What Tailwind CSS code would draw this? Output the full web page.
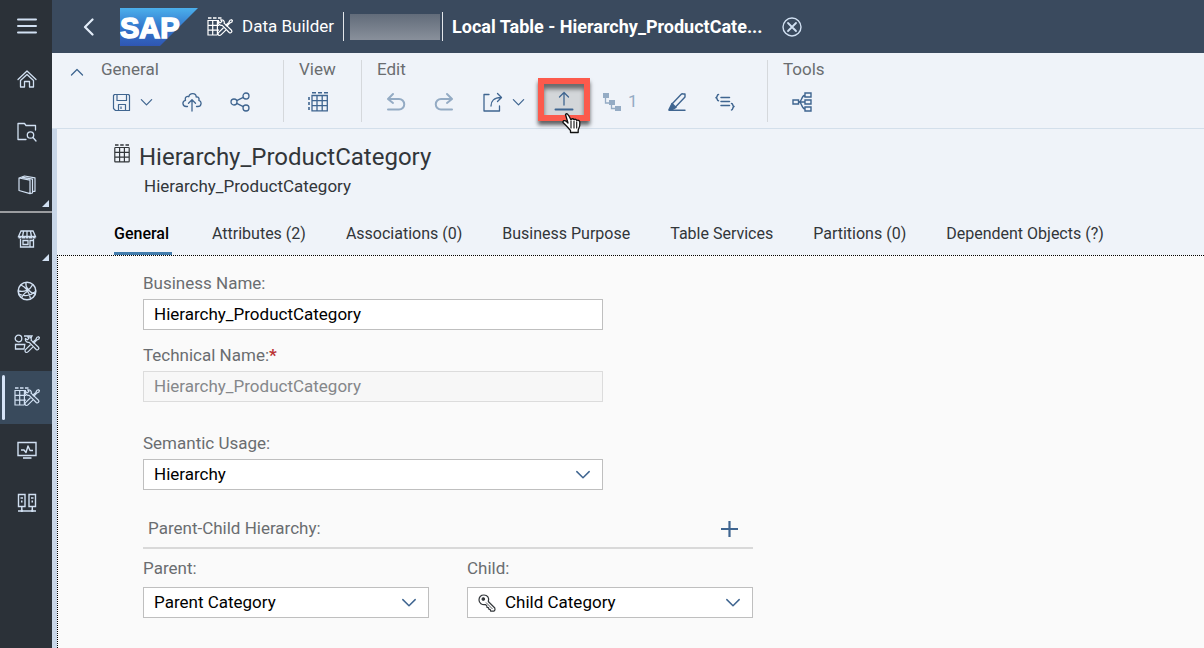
<!DOCTYPE html>
<html lang="en">
<head>
<meta charset="utf-8">
<meta name="viewport" content="width=device-width, initial-scale=1">
<title>Data Builder</title>
<script src="https://cdn.jsdelivr.net/npm/@tailwindcss/browser@4"></script>
</head>
<body class="flex min-h-screen bg-[#fafafa] font-['Roboto','Liberation_Sans',sans-serif] text-base text-[#32363a]">

<svg class="hidden" aria-hidden="true">
  <symbol id="down" viewBox="0 0 16 16"><path d="M2.500 5l5.500 5.500L13.500 5" fill="none" stroke="currentColor" stroke-width="1.300" stroke-linecap="round" stroke-linejoin="round"/></symbol>
  <symbol id="tools" viewBox="0 0 26 20">
    <g fill="none" stroke="currentColor" stroke-width="1.200" stroke-linecap="round" stroke-linejoin="round">
      <path d="M11.500 4.500a3 3 0 0 0 3.700 3.800l7 7.200a1.600 1.600 0 0 0 2.300-2.200l-7.200-6.900"/>
      <path d="M11.500 4.500l1.700 1.400 1.700-1.400-1.200-1.700c2.200-.4 4 1.200 3.600 3.600"/>
      <path d="M16.200 11l-4.700 4.600c-1 1.300-.3 2.800 1 2.900.8 0 1.300-.4 1.700-.8l4.300-4.400M20 9l2.500-2.700 2.400-1.300.5-1.500-.9-.8-1.500.6-1.300 2.300-2.700 2.400"/>
    </g>
  </symbol>
  <symbol id="builder" viewBox="0 0 26 20">
    <path d="M1 1h3.500M6 1h3.500M11 1h3.500" stroke="currentColor" stroke-width="1.500"/>
    <path d="M12 3.500H1V18h9.500M1 8.300h11M1 13.200h11M5.700 3.500V18M10.400 3.500V18" fill="none" stroke="currentColor" stroke-width="1.200"/>
    <use href="#tools"/>
  </symbol>
  <symbol id="table" viewBox="0 0 16 19">
    <path d="M1 1h3.500M6.200 1h3.500M11.500 1h3.500" stroke="currentColor" stroke-width="1.300"/>
    <path d="M1.500 3.500h13q.7 0 .7.700v13q0 .7-.7.700h-13q-.7 0-.7-.7v-13q0-.7.7-.7zM1 8.300h14M1 13.100h14M5.600 3.500v14.400M10.400 3.500v14.400" fill="none" stroke="currentColor" stroke-width="1.200"/>
  </symbol>
</svg>

<nav aria-label="Main" class="flex w-[52px] shrink-0 flex-col bg-[#2b3138] text-[#d1e0f2]">
  <button aria-label="Menu" class="grid h-[53px] place-items-center pb-px pl-px"><svg class="h-4 w-5" viewBox="0 0 20 16" stroke="currentColor" stroke-width="2" stroke-linecap="round"><path d="M1 1.500h18M1 8h18M1 14.500h18"/></svg></button>
  <button aria-label="Home" class="grid h-[53px] place-items-center pb-px pl-px"><svg class="size-5" viewBox="0 0 20 20" fill="none" stroke="currentColor" stroke-width="1.300" stroke-linejoin="round" stroke-linecap="round"><path d="M1 10.500L10 2l9 8.500M3.500 11.500L10 5.500l6.500 6V18h-4v-5.500h-5V18h-4z"/></svg></button>
  <button aria-label="Repository Explorer" class="grid h-[53px] place-items-center pb-px pl-px"><svg class="size-5" viewBox="0 0 20 20" fill="none" stroke="currentColor" stroke-width="1.300" stroke-linejoin="round" stroke-linecap="round"><path d="M9 17.500H1V1.500h6.500L9 3.500h9.500V8"/><circle cx="13.500" cy="13" r="3.200"/><path d="M16 15.500l3 3.500"/></svg></button>
  <button aria-label="Catalog" class="relative grid h-[54px] place-items-center border-b-2 border-[#9b9da0] pb-px pl-px"><svg class="size-5" viewBox="0 0 20 20" fill="none" stroke="currentColor" stroke-width="1.200" stroke-linejoin="round" stroke-linecap="round"><path d="M2 3l11 2.200v13.500L2 15.500zM2 3L7.500 1 18 2.800v13.500h-1.500M4.500 2.200l11 2V18l-2.500.7"/></svg><svg class="absolute right-[3px] bottom-1 size-[7px]" viewBox="0 0 7 7"><path d="M7 0v7H0z" fill="currentColor"/></svg></button>
  <button aria-label="Data Marketplace" class="relative grid h-[52px] place-items-center pb-px pl-px"><svg class="size-5" viewBox="0 0 20 20" fill="none" stroke="currentColor" stroke-width="1.300"><path d="M4 2h12l2.500 5.500h-17zM6.500 2.500l-1 5M10 2.500v5M13.500 2.500l1 5"/><path d="M1.500 8.200h17" stroke-width="2.400" stroke-dasharray="3 .5"/><path d="M3.500 10v8h13v-8M6 11.500h5v4H6zM13 18v-6.500h3"/></svg><svg class="absolute right-[3px] bottom-1 size-[7px]" viewBox="0 0 7 7"><path d="M7 0v7H0z" fill="currentColor"/></svg></button>
  <button aria-label="Semantic Onboarding" class="grid h-[53px] place-items-center pb-px pl-px"><svg class="size-5" viewBox="0 0 20 20" fill="none" stroke="currentColor" stroke-width="1.300"><circle cx="10" cy="10" r="8.800" stroke-width="1.600"/><path d="M4 4c3.500 1.500 7.500 5 9.500 13.500M9 1.500c-1 5 3.500 10.500 9.500 11.500M1.500 10c6 1.500 11.500-1 14-6M2 13c5 2.500 11.500 2 16.500-2.500M4.500 16.500c1.500-3 3.500-5 6.500-6.500"/></svg></button>
  <button aria-label="Business Builder" class="grid h-[53px] place-items-center pb-px pl-px"><svg class="h-5 w-[26px]" viewBox="0 0 26 20" fill="none" stroke="currentColor" stroke-width="1.300"><circle cx="4.500" cy="4.500" r="3.300"/><path d="M1.500 10.500h9.300l-.8 4.500H1.500zM10 2h8l-1 2"/><use href="#tools"/></svg></button>
  <button aria-label="Data Builder" aria-current="page" class="relative grid h-[53px] place-items-center bg-[#394a5c] pb-px pl-px"><span class="absolute inset-y-1 left-[2px] w-[3px] rounded-full bg-[#d6e4f8]"></span><svg class="h-5 w-[26px]"><use href="#builder"/></svg></button>
  <button aria-label="Data Integration Monitor" class="grid h-[53px] place-items-center pb-px pl-px"><svg class="size-5" viewBox="0 0 20 20" fill="none" stroke="currentColor" stroke-width="1.400"><path d="M1 2.500h18v13H1z"/><path d="M4 10h3l2 2.500 2-6.500 2 4.500h3" stroke-linejoin="round"/><path d="M6 18h8.500" stroke-width="1.600"/></svg></button>
  <button aria-label="Connections" class="grid h-[53px] place-items-center pb-px pl-px"><svg class="size-5" viewBox="0 0 20 20" fill="none" stroke="currentColor" stroke-width="1.400"><path d="M1.500 1.500h6.500v12H1.500zM12 1.500h6.500v12H12zM4.800 13.500v4.500M15.300 13.500v4.500M1 18h18M3.500 5h2.500M14 5h2.500"/><path d="M4 8.500h1.500M14.500 8.500H16M4.800 16.800v2.200M15.300 16.800v2.200" stroke-width="2"/></svg></button>
</nav>

<div class="flex min-w-0 grow flex-col">
  <header class="flex h-[53px] shrink-0 items-center bg-[#3a4a5e] text-[17px] text-white">
    <button aria-label="Back" class="ml-[27px] grid w-5 place-items-center text-[#e3edf9]"><svg class="h-[18px] w-3" viewBox="0 0 12 18" fill="none" stroke="currentColor" stroke-width="2.200" stroke-linecap="round" stroke-linejoin="round"><path d="M9.500 1.500L2 9l7.500 7.500"/></svg></button>
    <svg class="ml-[21px] h-[38px] w-[78px] shrink-0" viewBox="0 0 78 38" role="img" aria-label="SAP"><defs><linearGradient id="logo" x2="0" y2="1"><stop stop-color="#4bb0ec"/><stop offset=".5" stop-color="#3478cd"/><stop offset="1" stop-color="#2f56b3"/></linearGradient></defs><path d="M0 0h78L40 38H0z" fill="url(#logo)"/><text x="0" y="30" fill="#fff" stroke="#fff" stroke-width="1.500" font-family="Liberation Sans" font-size="29" font-weight="700">SAP</text></svg>
    <a href="#" class="ml-[9px] flex items-center gap-[9px] whitespace-nowrap"><svg class="h-5 w-[26px]"><use href="#builder"/></svg>Data Builder</a>
    <span class="ml-[9px] h-[29px] w-px shrink-0 bg-[#e2e6ea]"></span>
    <span class="mx-[6px] h-[26px] w-[90px] shrink-0 bg-linear-to-b from-[#626c7a] to-[#89909b]"></span>
    <span class="-ml-1 h-[29px] w-px shrink-0 bg-[#e2e6ea]"></span>
    <h2 class="ml-[9px] truncate text-lg font-bold">Local Table - Hierarchy_ProductCate...</h2>
    <button aria-label="Close" class="ml-[19px] shrink-0 text-[#d1e0f2]"><svg class="size-5" viewBox="0 0 20 20" fill="none" stroke="currentColor" stroke-width="1.400" stroke-linecap="round"><circle cx="10" cy="10" r="9"/><path d="M6 6l8 8M14 6l-8 8" stroke-width="1.800"/></svg></button>
  </header>

  <div role="toolbar" aria-label="Table actions" class="flex h-[76px] shrink-0 border-b border-[#d3dfeb] bg-[#eff3f9] pt-[7px] text-[#3f6590]">
    <button aria-label="Collapse toolbar" class="flex h-6 w-[44px] justify-center pt-1 pl-[6px]"><svg class="size-4 rotate-180"><use href="#down"/></svg></button>
    <section class="h-[62px] border-r border-[#d5d8dc] pr-[19px]">
      <h3 class="pl-[5px] text-[17px] leading-[18px] text-[#6a6d70]">General</h3>
      <div class="mt-[7px] flex h-[34px]">
        <button aria-label="Save" class="flex w-[72px] items-center gap-2 pl-4"><svg class="size-[19px]" viewBox="0 0 19 19" fill="none" stroke="currentColor" stroke-width="1.200" stroke-linejoin="round"><path d="M2.500 1.500h14l1 1v15h-14l-2-2v-13zM5 1.500v6h9.500v-6M6.500 17.500v-6h7v6M9 13.500v2.500"/></svg><svg class="size-[15px]"><use href="#down"/></svg></button>
        <button aria-label="Deploy" class="grid w-12 place-items-center"><svg class="size-5" viewBox="0 0 20 20" fill="none" stroke="currentColor" stroke-width="1.300" stroke-linecap="round" stroke-linejoin="round"><path d="M5.500 14.500H4.200C.2 14.300-.2 9 3.500 8.300c-1-3 1.500-4.500 3.300-3.500C7.500.5 14.200.5 14.200 5c2.500-.3 3.300 1.500 2.600 3.300 3.500 1 2.700 6.200-1 6.200h-1.300M10 19V8M6.500 11.200L10 7.800l3.500 3.400"/></svg></button>
        <button aria-label="Share" class="grid w-12 place-items-center"><svg class="size-5" viewBox="0 0 20 20" fill="none" stroke="currentColor" stroke-width="1.300"><circle cx="4" cy="10" r="3"/><circle cx="16" cy="4" r="3"/><circle cx="16" cy="16" r="3"/><path d="M6.700 8.700l6.600-3.400M6.700 11.300l6.600 3.400"/></svg></button>
      </div>
    </section>
    <section class="h-[62px] border-r border-[#d5d8dc] pr-[19px] pl-[10px]">
      <h3 class="pl-[5px] text-[17px] leading-[18px] text-[#6a6d70]">View</h3>
      <button aria-label="Data Viewer" class="mt-[7px] grid h-[34px] w-12 place-items-center"><svg class="size-5" viewBox="0 0 20 20" fill="none" stroke="currentColor" stroke-width="1.300"><path d="M4 .8h4M10 .8h4M16 .8h4M1 5v3M1 10v3M1 15v3" stroke-width="1.600"/><path d="M4 3.500h15.300v15.300H4zM4 8.600h15.300M4 13.700h15.300M9 3.500v15.300M14.200 3.500v15.300"/></svg></button>
    </section>
    <section class="h-[62px] border-r border-[#d5d8dc] pr-[19px] pl-[10px]">
      <h3 class="pl-[5px] text-[17px] leading-[18px] text-[#6a6d70]">Edit</h3>
      <div class="mt-[7px] flex h-[34px]">
        <button aria-label="Undo" disabled class="grid w-12 place-items-center text-[#94abc4]"><svg class="size-5" viewBox="0 0 20 20" fill="none" stroke="currentColor" stroke-width="2" stroke-linecap="round" stroke-linejoin="round"><path d="M2 17.500h11a5 5 0 0 0 0-10.500H2.500M7 2l-5 5 5 4"/></svg></button>
        <button aria-label="Redo" disabled class="grid w-12 place-items-center text-[#94abc4]"><svg class="size-5" viewBox="0 0 20 20" fill="none" stroke="currentColor" stroke-width="2" stroke-linecap="round" stroke-linejoin="round"><path d="M18 17.500H7A5 5 0 0 1 7 7h10.500M13 2l5 5-5 4"/></svg></button>
        <button aria-label="Export" class="flex w-[70px] items-center gap-2 pl-[14px]"><svg class="size-[21px]" viewBox="0 0 21 21" fill="none" stroke="currentColor" stroke-width="1.300" stroke-linecap="round" stroke-linejoin="round"><path d="M7 2.500H2V19h15.500v-5M9 14c0-5 3-8.500 10-8.500M15.500 1.500l4 4-4 4"/></svg><svg class="size-[15px]"><use href="#down"/></svg></button>
        <div class="relative w-[52px]">
          <button aria-label="Upload data from file" class="absolute -top-[7px] left-0 grid h-[43px] w-[52px] place-items-center border-[6px] border-[#fc5a4c] bg-[#d3d6d9] pt-[3px] shadow-[0_4px_4px_rgba(0,0,0,.6),inset_0_5px_4px_rgba(0,0,0,.5)]"><svg class="size-5" viewBox="0 0 20 20" fill="none" stroke="currentColor" stroke-width="1.300" stroke-linecap="round"><path d="M10 14V1.500M5.500 6L10 1.500 14.500 6"/><path d="M1.500 18.500h17" stroke-width="2"/></svg></button>
          <svg class="absolute top-[27px] left-[24px] h-[23px] w-5" viewBox="0 0 20 23" aria-hidden="true"><path d="M3.500 2.500C5 .7 6.300 2.500 7.500 5l1.500 3c.3-1.500 2.300-1.800 3-.2.800-1 2.500-.6 2.800.7 1-.7 2.700-.2 3 1.300.5 3-.3 5.500-1.600 8.200v2.500H8.500v-2L4.500 14 1 10.500C.5 8.500 3 8 4.500 9.500L6 11z" fill="#fff" stroke="#111" stroke-width="1.300" stroke-linejoin="round"/><path d="M9 9v7.500M12 9v7.500M14.700 9.500v7" stroke="#111" stroke-width="1.100"/></svg>
        </div>
        <button aria-label="Used in hierarchies, 1" disabled class="flex w-[63px] items-center gap-[6px] pl-3 text-[17px] text-[#94abc4]"><svg class="size-5" viewBox="0 0 20 20" fill="none" stroke="currentColor" stroke-width="1.300"><path d="M3.500 5v6h6v5.500h6"/><path d="M1 1h6v5H1zM7 8h6v5H7zM13 14h6v5h-6z" fill="currentColor" stroke="none"/></svg>1</button>
        <button aria-label="Edit" class="grid w-12 place-items-center"><svg class="size-5" viewBox="0 0 20 20" fill="none" stroke="currentColor" stroke-width="1.400" stroke-linejoin="round" stroke-linecap="round"><path d="M5 12L14 2.500q1-1 2-.5h2v3L8.500 15"/><path d="M5 11.500l4 4L5.500 17.500H2z" fill="currentColor"/><path d="M2 18.300h16"/></svg></button>
        <button aria-label="Edit custom properties" class="grid w-[47px] place-items-center"><svg class="size-5" viewBox="0 0 20 20" fill="none" stroke="currentColor" stroke-width="1.500" stroke-linecap="round" stroke-linejoin="round"><path d="M6 5.500h8.500M6 9.500h8.500M6 13.500h8.500"/><path d="M3.500 2.500C1.500 2.500 3 5 1 5.700c2 .6.500 3 2.500 3M16.500 11.500c2 0 .5 2.500 2.500 3-2 .7-.5 3.500-2.500 3.500"/></svg></button>
      </div>
    </section>
    <section class="h-[62px] pl-[10px]">
      <h3 class="pl-[5px] text-[17px] leading-[18px] text-[#6a6d70]">Tools</h3>
      <button aria-label="Impact and lineage analysis" class="mt-[7px] grid h-[34px] w-12 place-items-center"><svg class="size-5" viewBox="0 0 20 20" fill="none" stroke="currentColor" stroke-width="1.400"><path d="M1 8h5.500v4H1zM13 1h6v4h-6zM13 8h6v4h-6zM13 15h6v4h-6zM6.500 10H13M13 3c-3.500.5-3 6-5.500 7 2.500 1 2 6.500 5.500 7"/></svg></button>
    </section>
  </div>

  <main class="flex grow flex-col border-l-[5px] border-[#c8d6e8]">
    <div class="bg-[#eff3f9] pt-3 pl-[57px]">
      <div class="flex gap-[9px]"><svg class="mt-[3px] h-[19px] w-4"><use href="#table"/></svg><h1 class="text-2xl leading-8">Hierarchy_ProductCategory</h1></div>
      <p class="mt-px pl-[30px] text-[17px] leading-6">Hierarchy_ProductCategory</p>
      <div role="tablist" class="mt-6 flex gap-10 text-base leading-6 whitespace-nowrap">
        <button role="tab" aria-selected="true" class="min-w-[58px] border-b-3 border-[#427cac] pb-[6px] text-left font-medium text-black">General</button>
        <button role="tab" class="border-b-3 border-transparent pb-[6px]">Attributes (2)</button>
        <button role="tab" class="border-b-3 border-transparent pb-[6px]">Associations (0)</button>
        <button role="tab" class="border-b-3 border-transparent pb-[6px]">Business Purpose</button>
        <button role="tab" class="border-b-3 border-transparent pb-[6px]">Table Services</button>
        <button role="tab" class="border-b-3 border-transparent pb-[6px]">Partitions (0)</button>
        <button role="tab" class="border-b-3 border-transparent pb-[6px]">Dependent Objects (?)</button>
      </div>
    </div>
    <form class="grow border-t border-l border-dotted border-black bg-[#fafafa] pt-[15px] pb-[26px] pl-[85px] text-[17px] text-black">
      <div class="w-[460px] max-w-full">
        <label for="bname" class="block leading-6 text-[#6a6d70]">Business Name:</label>
        <input id="bname" value="Hierarchy_ProductCategory" class="mt-1 block h-[31px] w-full border border-[#bfbfbf] bg-white px-[10px] pb-[2px]">
        <label for="tname" class="mt-[13px] block leading-6 text-[#6a6d70]">Technical Name:<span class="font-bold text-[#b33]">*</span></label>
        <input id="tname" disabled value="Hierarchy_ProductCategory" class="mt-1 block h-[31px] w-full border border-[#dcdcdc] bg-[#f7f7f7] px-[10px] pb-[2px] text-[#85878a]">
        <label for="usage" class="mt-[29px] block leading-6 text-[#6a6d70]">Semantic Usage:</label>
        <div class="relative mt-1">
          <select id="usage" class="block h-[31px] w-full appearance-none border border-[#bfbfbf] bg-white px-[10px]"><option>Hierarchy</option></select>
          <svg class="pointer-events-none absolute top-[7px] right-[11px] size-[18px] text-[#3f6590]"><use href="#down"/></svg>
        </div>
      </div>
      <fieldset class="w-[610px] max-w-full">
        <div class="mt-5 flex h-[39px] items-center justify-between border-b-2 border-[#d9d9d9] pr-[15px] pl-[5px]">
          <h2 class="text-[#6a6d70]">Parent-Child Hierarchy:</h2>
          <button type="button" aria-label="Add" class="text-[#3f6590]"><svg class="block h-4 w-[17px]" viewBox="0 0 17 16" stroke="currentColor" stroke-width="2.200"><path d="M0 8h17M8.500 0v16"/></svg></button>
        </div>
        <div class="mt-[7px] grid grid-cols-2 gap-[38px]">
          <div>
            <label for="parent" class="block leading-6 text-[#6a6d70]">Parent:</label>
            <div class="relative mt-[7px]">
              <select id="parent" class="block h-[31px] w-full appearance-none border border-[#bfbfbf] bg-white px-[10px]"><option>Parent Category</option></select>
              <svg class="pointer-events-none absolute top-[7px] right-[11px] size-[18px] text-[#3f6590]"><use href="#down"/></svg>
            </div>
          </div>
          <div>
            <label for="child" class="block leading-6 text-[#6a6d70]">Child:</label>
            <div class="relative mt-[7px]">
              <select id="child" class="block h-[31px] w-full appearance-none border border-[#bfbfbf] bg-white pr-[10px] pl-[37px]"><option>Child Category</option></select>
              <svg class="pointer-events-none absolute top-[7px] left-[11px] size-[18px] text-[#32363a]" viewBox="0 0 18 18" fill="none" stroke="currentColor" stroke-width="1.200" stroke-linejoin="round"><path d="M10.300 7.500C11.500 4 9.500 1 6 1 3 1 1 3 1 6c0 3 3 5.300 6.500 4.500l1.300 1.300.2 1.700 1.500.2.300 1.500 1.500.4.300 1.500H16l1-1.200-.2-1.900z"/><circle cx="5.300" cy="5" r="1.200" fill="currentColor"/><path d="M8 8.500l6.500 6.500" stroke-width=".8"/></svg>
              <svg class="pointer-events-none absolute top-[7px] right-[11px] size-[18px] text-[#3f6590]"><use href="#down"/></svg>
            </div>
          </div>
        </div>
      </fieldset>
    </form>
  </main>
</div>
</body>
</html>
